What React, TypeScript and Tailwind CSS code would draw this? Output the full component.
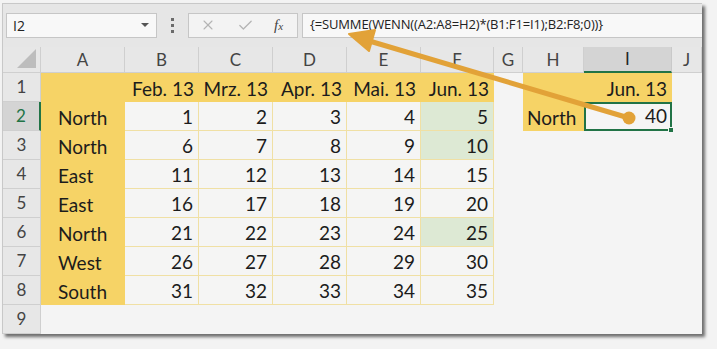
import React from 'react';
import { X, Check } from 'lucide-react';

const months = ['Feb. 13', 'Mrz. 13', 'Apr. 13', 'Mai. 13', 'Jun. 13'];

const data: [string, number[]][] = [
  ['North', [1, 2, 3, 4, 5]],
  ['North', [6, 7, 8, 9, 10]],
  ['East', [11, 12, 13, 14, 15]],
  ['East', [16, 17, 18, 19, 20]],
  ['North', [21, 22, 23, 24, 25]],
  ['West', [26, 27, 28, 29, 30]],
  ['South', [31, 32, 33, 34, 35]],
];

// rows where the Jun. value counts (region = North)
const hit = [true, true, false, false, true, false, false];

const letters = ['A', 'B', 'C', 'D', 'E', 'F', 'G', 'H', 'I', 'J'];

const cellText = 'flex items-end pb-[2px] leading-[23px] text-[19px] text-[#1c1c1c]';

const ColHeader = ({ letter }: { letter: string }) =>
  letter === 'I' ? (
    <div className="flex items-center justify-center bg-[#d4d4d4] border-r border-[#c9c9c9] border-b-2 border-b-[#217346] text-[17px] text-[#262626]">
      {letter}
    </div>
  ) : (
    <div className="flex items-center justify-center bg-[#e7e7e7] border-r border-b border-[#cfcfcf] text-[17px] text-[#444]">
      {letter}
    </div>
  );

const RowHeader = ({ n }: { n: number }) =>
  n === 2 ? (
    <div className="flex items-center justify-center bg-[#d4d4d4] border-b border-[#cfcfcf] border-r-2 border-r-[#217346] text-[17px] text-[#217346]">
      {n}
    </div>
  ) : (
    <div className="flex items-center justify-center bg-[#e7e7e7] border-b border-r border-[#cfcfcf] text-[17px] text-[#444]">
      {n}
    </div>
  );

const Empty = () => <div className="bg-[#f4f4f4]" />;

export default function App() {
  return (
    <div className="relative w-[717px] h-[349px] overflow-hidden bg-[#f3f3f3] pt-[3px] pl-[2px] font-['Lato',sans-serif]">
      <div className="flex flex-col w-[700px] h-[331px] bg-[#f4f4f4] border-l border-t border-[#c8c8c8] shadow-[3px_3px_3px_rgba(0,0,0,0.55)]">
        {/* formula bar */}
        <div className="flex items-center h-[43px] shrink-0 bg-[#e6e6e6] pl-[3px] pb-[1px]">
          <div className="flex items-center justify-between w-[151px] h-[25px] bg-[#f8f8f8] border border-[#c6c6c6] pl-[6px] pr-[7px] font-['Open_Sans',sans-serif] text-[14px] text-[#222]">
            <span>I2</span>
            <span className="w-0 h-0 border-l-[4px] border-r-[4px] border-t-[4px] border-l-transparent border-r-transparent border-t-[#555]" />
          </div>
          <div className="flex flex-col items-center justify-center gap-[3px] w-[31px]">
            <span className="w-[3px] h-[3px] bg-[#6b6b6b]" />
            <span className="w-[3px] h-[3px] bg-[#6b6b6b]" />
            <span className="w-[3px] h-[3px] bg-[#6b6b6b]" />
          </div>
          <div className="flex items-center w-[110px] h-[25px] bg-[#f3f3f3] border border-[#c6c6c6] pl-[11px]">
            <X size={16} strokeWidth={1.6} className="text-[#b4b4b4]" />
            <Check size={17} strokeWidth={1.8} className="ml-[21px] text-[#b4b4b4]" />
            <span className="ml-[20px] font-['Liberation_Serif',serif] italic text-[15px] text-[#444] leading-none">
              f<span className="text-[11px]">x</span>
            </span>
          </div>
          <div className="flex items-center flex-1 h-[25px] ml-[4px] bg-[#f8f8f8] border-t border-b border-l border-[#c6c6c6] pl-[7px] font-['Open_Sans',sans-serif] text-[13px] text-[#222] tracking-[-0.15px]">
            {'{=SUMME(WENN((A2:A8=H2)*(B1:F1=I1);B2:F8;0))}'}
          </div>
        </div>

        {/* sheet */}
        <div className="grid grid-cols-[38px_84px_74px_74px_74px_74px_73px_29px_61px_88px_1fr] grid-rows-[26px_repeat(9,29px)]">
          <div className="flex items-end justify-end p-[4px] bg-[#e7e7e7] border-r border-b border-[#cfcfcf]">
            <span className="w-0 h-0 border-l-[19px] border-l-transparent border-b-[19px] border-b-[#bdbdbd]" />
          </div>
          {letters.map((l) => (
            <ColHeader key={l} letter={l} />
          ))}

          {/* row 1 */}
          <RowHeader n={1} />
          <div className="bg-[#f6d366]" />
          {months.map((m) => (
            <div key={m} className={`${cellText} justify-end pr-[5px] bg-[#f6d366]`}>
              {m}
            </div>
          ))}
          <Empty />
          <div className="bg-[#f6d366]" />
          <div className={`${cellText} justify-end pr-[5px] bg-[#f6d366]`}>Jun. 13</div>
          <Empty />

          {/* rows 2-8 */}
          {data.map(([region, vals], r) => (
            <React.Fragment key={r}>
              <RowHeader n={r + 2} />
              <div className={`${cellText} pl-[17px] bg-[#f6d366]`}>{region}</div>
              {vals.map((v, c) => (
                <div
                  key={c}
                  className={`${cellText} justify-end pr-[5px] border-r border-b border-[#f0e0a4] ${
                    c === 4 && hit[r] ? 'bg-[#dde9d4]' : 'bg-[#f5f5f4]'
                  }`}
                >
                  {v}
                </div>
              ))}
              <Empty />
              {r === 0 ? (
                <>
                  <div className={`${cellText} pl-[4px] bg-[#f6d366]`}>North</div>
                  <div className={`${cellText} relative justify-end pr-[3px] bg-[#f5f5f5] border-2 border-[#217346]`}>
                    40
                    <span className="absolute right-[-4px] bottom-[-4px] w-[6px] h-[6px] bg-[#217346] border border-[#f5f5f5]" />
                  </div>
                </>
              ) : (
                <>
                  <Empty />
                  <Empty />
                </>
              )}
              <Empty />
            </React.Fragment>
          ))}

          {/* row 9 */}
          <RowHeader n={9} />
          {letters.map((l) => (
            <Empty key={l} />
          ))}
        </div>
      </div>

      {/* annotation arrow */}
      <svg className="absolute inset-0 pointer-events-none" width="717" height="349" viewBox="0 0 717 349">
        <line x1="629" y1="118" x2="366" y2="40" stroke="#e2a238" strokeWidth="5" strokeLinecap="round" />
        <polygon points="349,34 369,51 375,30" fill="#e2a238" stroke="#e2a238" strokeWidth="2" strokeLinejoin="round" />
        <circle cx="629" cy="118" r="6.5" fill="#e2a238" />
      </svg>
    </div>
  );
}
